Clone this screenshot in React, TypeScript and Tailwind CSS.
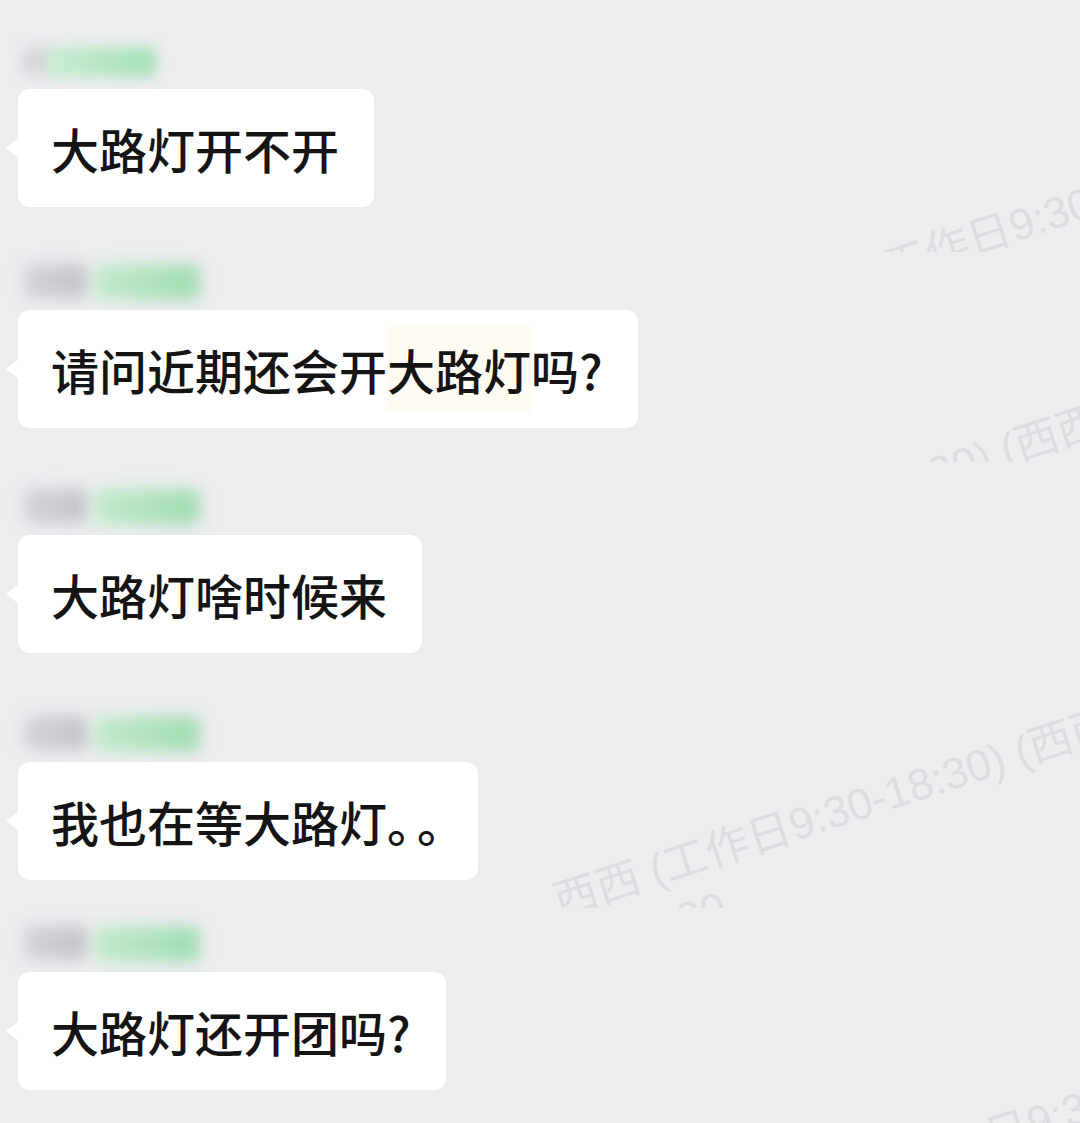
import React from "react";

const font = { fontFamily: '"Noto Sans CJK SC", "Noto Sans", sans-serif' };
const wmFont = { fontFamily: '"Liberation Sans", "Noto Sans CJK SC", sans-serif' };

function NameBlur({ first }: { first?: boolean }) {
  if (first) {
    return (
      <div className="relative h-[50px] w-[220px]">
        <div className="absolute left-[22px] top-[8px] h-[28px] w-[34px] rounded-md bg-[#d6d7db] blur-[7px]" />
        <div className="absolute left-[48px] top-[8px] h-[30px] w-[108px] rounded-md bg-gradient-to-r from-[#c8edd3] to-[#a3e0b4] blur-[7px]" />
      </div>
    );
  }
  return (
    <div className="relative h-[50px] w-[220px]">
      <div className="absolute left-[24px] top-[4px] h-[34px] w-[64px] rounded-lg bg-gradient-to-r from-[#d3d4d8] to-[#c2c3c8] blur-[8px]" />
      <div className="absolute left-[94px] top-[4px] h-[36px] w-[106px] rounded-lg bg-gradient-to-r from-[#c3ebcd] to-[#9fdcb0] blur-[8px]" />
    </div>
  );
}

function Bubble({ children }: { children: React.ReactNode }) {
  return (
    <div className="relative ml-[18px] inline-flex h-[118px] items-center rounded-[12px] bg-white pl-[33px] pr-[35px]">
      <div className="absolute left-[-12px] top-1/2 h-0 w-0 -translate-y-1/2 border-y-[10px] border-r-[13px] border-y-transparent border-r-white" />
      <span className="whitespace-nowrap text-[48px] font-medium leading-none text-[#141414]" style={font}>
        {children}
      </span>
    </div>
  );
}

function WmLine({ className, text }: { className: string; text: string }) {
  return (
    <div
      className={
        "pointer-events-none absolute origin-bottom-left -rotate-[18deg] whitespace-nowrap text-[44px] leading-none text-[#dcdde1] " +
        className
      }
      style={wmFont}
    >
      {text}
    </div>
  );
}

const WM = "西西 (工作日9:30-18:30) (西西 (工作日9:30-18:30)";

export default function App() {
  return (
    <div className="relative h-[1123px] w-[1080px] overflow-hidden bg-[#ededf0]">
      {/* watermark fragments */}
      <div className="pointer-events-none absolute left-0 top-0 h-[252px] w-[1080px] overflow-hidden">
        <WmLine className="left-[782px] top-[281px]" text={WM} />
      </div>
      <div className="pointer-events-none absolute left-0 top-0 h-[462px] w-[1080px] overflow-hidden">
        <WmLine className="left-[548px] top-[578px]" text={WM} />
      </div>
      <div className="pointer-events-none absolute left-0 top-0 h-[908px] w-[1080px] overflow-hidden">
        <WmLine className="left-[562px] top-[880px]" text={WM} />
        <WmLine className="left-[650px] top-[909px]" text="8:30" />
      </div>
      <WmLine className="left-[800px] top-[1178px]" text={WM} />

      <div className="relative flex flex-col items-start pt-[39px]">
        <div className="flex flex-col items-start">
          <NameBlur first />
          <Bubble>大路灯开不开</Bubble>
        </div>
        <div className="mt-[53px] flex flex-col items-start">
          <NameBlur />
          <Bubble>
            请问近期还会开<span className="bg-[#fdfbf2] py-[8px]">大路灯</span>吗?
          </Bubble>
        </div>
        <div className="mt-[57px] flex flex-col items-start">
          <NameBlur />
          <Bubble>大路灯啥时候来</Bubble>
        </div>
        <div className="mt-[59px] flex flex-col items-start">
          <NameBlur />
          <Bubble>
            我也在等大路灯<span className="inline-block w-[30px] overflow-visible">。</span>
            <span className="inline-block w-[26px] overflow-visible">。</span>
          </Bubble>
        </div>
        <div className="mt-[42px] flex flex-col items-start">
          <NameBlur />
          <Bubble>大路灯还开团吗?</Bubble>
        </div>
      </div>
    </div>
  );
}
